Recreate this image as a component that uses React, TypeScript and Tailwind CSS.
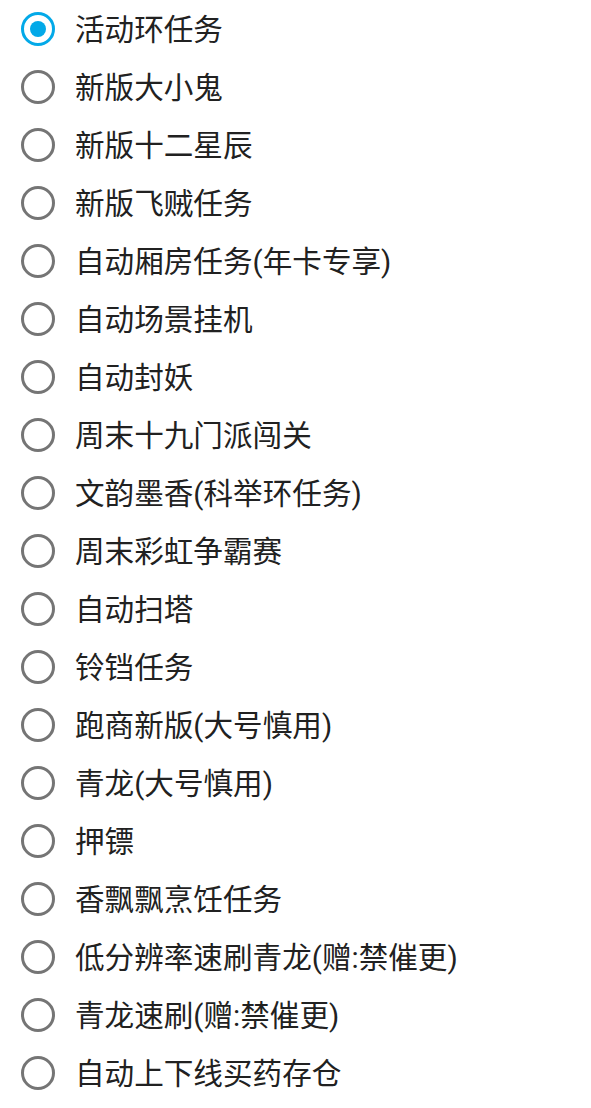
import React from 'react';

const items = [
  '活动环任务',
  '新版大小鬼',
  '新版十二星辰',
  '新版飞贼任务',
  '自动厢房任务(年卡专享)',
  '自动场景挂机',
  '自动封妖',
  '周末十九门派闯关',
  '文韵墨香(科举环任务)',
  '周末彩虹争霸赛',
  '自动扫塔',
  '铃铛任务',
  '跑商新版(大号慎用)',
  '青龙(大号慎用)',
  '押镖',
  '香飘飘烹饪任务',
  '低分辨率速刷青龙(赠:禁催更)',
  '青龙速刷(赠:禁催更)',
  '自动上下线买药存仓',
];

const App = () => {
  const selected = 0;
  return (
    <div
      className="w-[591px] h-[1108px] bg-white"
      style={{ fontFamily: '"Roboto", "Noto Sans CJK SC", sans-serif' }}
    >
      {items.map((label, i) => (
        <div key={label} className="flex items-center h-[58px] pl-[21px]">
          {i === selected ? (
            <span className="flex items-center justify-center w-[34px] h-[34px] rounded-full border-[3.5px] border-[#03a9e8]">
              <span className="w-[16px] h-[16px] rounded-full bg-[#03a9e8]" />
            </span>
          ) : (
            <span className="w-[34px] h-[34px] rounded-full border-[3.5px] border-[#757575]" />
          )}
          <span className="ml-[20px] pt-[3px] text-[29.6px] leading-none text-[#212121]">{label}</span>
        </div>
      ))}
    </div>
  );
};

export default App;
